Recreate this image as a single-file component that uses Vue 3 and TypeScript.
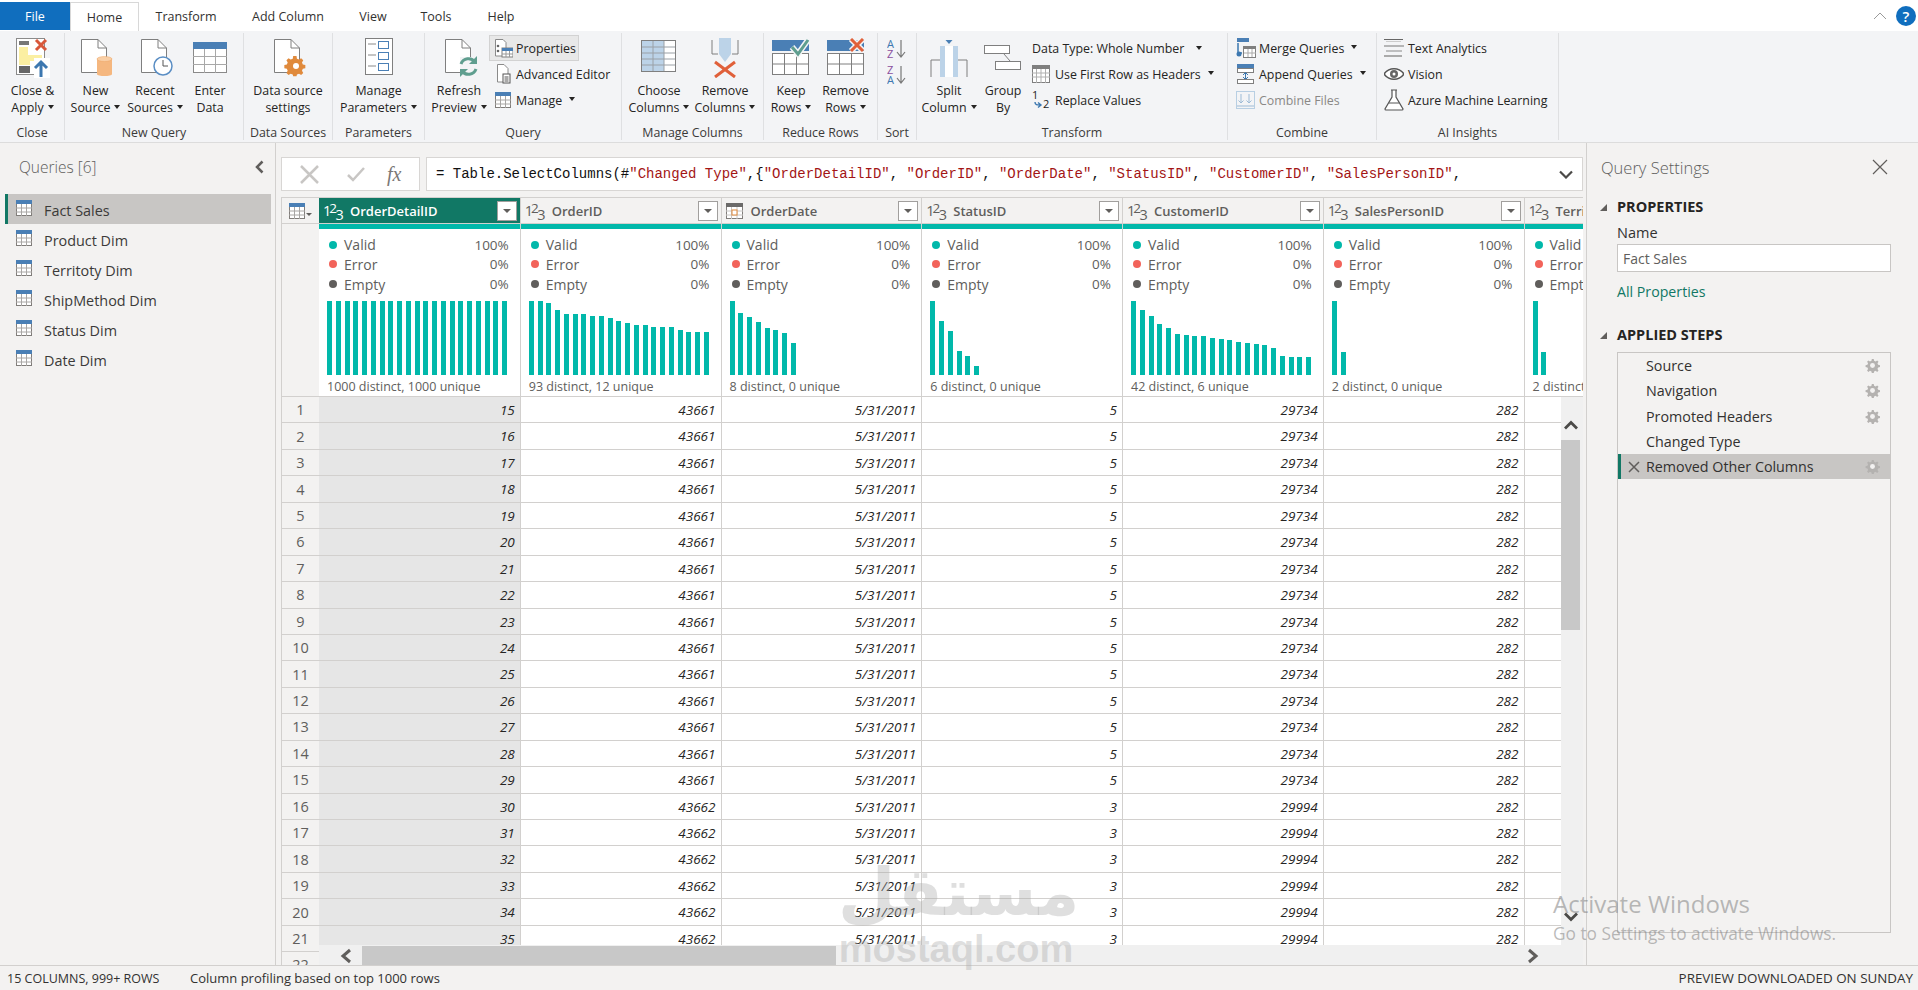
<script setup lang="ts">
interface Col { name: string; icon: 'num' | 'date'; filter: boolean; distinct: string; bars: number[]; values: (i: number) => string }
const full = Array.from({ length: 21 }, () => 74)
const cols: Col[] = [
  { name: 'OrderDetailID', icon: 'num', filter: true, distinct: '1000 distinct, 1000 unique', bars: full, values: (i) => String(i + 15) },
  { name: 'OrderID', icon: 'num', filter: true, distinct: '93 distinct, 12 unique', bars: [74, 74, 72, 65, 61, 61, 61, 59, 59, 57, 54, 52, 50, 50, 48, 48, 48, 45, 43, 43, 43], values: (i) => (i < 15 ? '43661' : '43662') },
  { name: 'OrderDate', icon: 'date', filter: true, distinct: '8 distinct, 0 unique', bars: [74, 62, 58, 53, 47, 45, 42, 32], values: () => '5/31/2011' },
  { name: 'StatusID', icon: 'num', filter: true, distinct: '6 distinct, 0 unique', bars: [74, 54, 44, 24, 19, 9], values: (i) => (i < 15 ? '5' : '3') },
  { name: 'CustomerID', icon: 'num', filter: true, distinct: '42 distinct, 6 unique', bars: [74, 65, 59, 51, 47, 41, 40, 39, 39, 37, 36, 35, 33, 32, 31, 30, 27, 19, 18, 18, 18], values: (i) => (i < 15 ? '29734' : '29994') },
  { name: 'SalesPersonID', icon: 'num', filter: true, distinct: '2 distinct, 0 unique', bars: [74, 23], values: () => '282' },
  { name: 'TerritoryID', icon: 'num', filter: false, distinct: '2 distinct, 0 unique', bars: [74, 23], values: () => '' },
]
const stats = [
  { label: 'Valid', pct: '100%', cls: 'd-valid' },
  { label: 'Error', pct: '0%', cls: 'd-error' },
  { label: 'Empty', pct: '0%', cls: 'd-empty' },
]
const rows = Array.from({ length: 22 }, (_, i) => i)
const queries = ['Fact Sales', 'Product Dim', 'Territoty Dim', 'ShipMethod Dim', 'Status Dim', 'Date Dim']
const steps = [
  { name: 'Source', gear: true },
  { name: 'Navigation', gear: true },
  { name: 'Promoted Headers', gear: true },
  { name: 'Changed Type', gear: false },
  { name: 'Removed Other Columns', gear: true },
]
const tabs = [
  { name: 'Transform', cls: 't-transform' },
  { name: 'Add Column', cls: 't-add' },
  { name: 'View', cls: 't-view' },
  { name: 'Tools', cls: 't-tools' },
  { name: 'Help', cls: 't-help' },
]
const strs = ['"OrderDetailID"', '"OrderID"', '"OrderDate"', '"StatusID"', '"CustomerID"', '"SalesPersonID"']
</script>

<template>
  <div class="app">
    <svg class="defs" width="0" height="0">
      <symbol id="tbl" viewBox="0 0 16 16">
        <rect x="0.5" y="0.5" width="15" height="15" fill="#fff" stroke="#807d7a" />
        <rect x="0" y="0" width="16" height="4" fill="#4a7fb5" />
        <path d="M0 8h16M0 12h16M5.5 4v12M10.5 4v12" stroke="#a8a6a4" />
      </symbol>
      <symbol id="gear" viewBox="0 0 16 16">
        <path d="M8 1l1.3 0 .4 2 1.6.7 1.7-1.1 1.4 1.4-1.1 1.7.7 1.6 2 .4v2l-2 .4-.7 1.6 1.1 1.7-1.4 1.4-1.7-1.1-1.6.7-.4 2h-2l-.4-2-1.6-.7-1.7 1.1-1.4-1.4 1.1-1.7-.7-1.6-2-.4v-2l2-.4.7-1.6-1.1-1.7 1.4-1.4 1.7 1.1 1.6-.7.4-2z" fill="#b4b2b0" />
        <circle cx="8" cy="8" r="2.6" fill="#f3f2f1" />
      </symbol>
      <symbol id="doc" viewBox="0 0 26 34">
        <path d="M.5.5H17L25.5 9V33.5H.5Z" fill="#fff" stroke="#7f7f7f" />
        <path d="M17 .5V9h8.5" fill="none" stroke="#7f7f7f" />
      </symbol>
    </svg>

    <header class="tabs">
      <div class="tab file">File</div>
      <div class="tab home">Home</div>
      <div v-for="t in tabs" :key="t.name" class="tab" :class="t.cls">{{ t.name }}</div>
      <div class="tab-right">
        <svg class="collapse" width="14" height="8" viewBox="0 0 14 8"><path d="M1 7l6-6 6 6" fill="none" stroke="#9a9a9a" /></svg>
        <div class="help">?</div>
      </div>
    </header>

    <section class="ribbon">
      <div class="grp g-close">
        <div class="grp-body">
          <div class="big w65">
            <svg class="ic" width="34" height="40" viewBox="0 0 34 40">
              <rect x=".5" y=".5" width="28" height="36" fill="#fff" stroke="#8a8a8a" />
              <rect x="3" y="3" width="10" height="4" fill="#777" />
              <path d="M3 9H12V17H26V23H14V27H3Z" fill="#fbefa2" />
              <rect x="3" y="28" width="11" height="7" fill="#666" />
              <rect x="18" y="20" width="16" height="20" fill="#fff" />
              <path d="M20 2l10 10M30 2L20 12" stroke="#d8573a" stroke-width="3" />
              <path d="M25 39V25M19 30l6-6 6 6" fill="none" stroke="#3d78b0" stroke-width="3" />
            </svg>
            <span>Close &amp;<br />Apply<i class="caret" /></span>
          </div>
        </div>
        <div class="grp-label">Close</div>
      </div>

      <div class="grp g-new">
        <div class="grp-body">
          <div class="big w61">
            <svg class="ic" width="34" height="40" viewBox="0 0 34 40">
              <use href="#doc" x="2" y="1" width="26" height="34" />
              <path d="M18 21c0-2.500 15-2.500 15 0v15c0 2.800-15 2.800-15 0z" fill="#f5b77f" />
              <ellipse cx="25.500" cy="21" rx="7.500" ry="2.500" fill="#f9cfa6" stroke="#eda465" stroke-width=".5" />
            </svg>
            <span>New<br />Source<i class="caret" /></span>
          </div>
          <div class="big w58">
            <svg class="ic" width="36" height="40" viewBox="0 0 36 40">
              <use href="#doc" x="4" y="1" width="26" height="34" />
              <circle cx="26" cy="28" r="9" fill="#fff" stroke="#5a8ec4" stroke-width="1.500" />
              <path d="M26 22v6h5" fill="none" stroke="#555" />
            </svg>
            <span>Recent<br />Sources<i class="caret" /></span>
          </div>
          <div class="big w52">
            <svg class="ic" width="34" height="40" viewBox="0 0 34 40">
              <rect x=".5" y="4.500" width="33" height="30" fill="#fff" stroke="#8a8a8a" />
              <rect x="0" y="4" width="34" height="7" fill="#4a7fb5" />
              <path d="M0 18.500h34M0 26.500h34M11.500 11v24M22.500 11v24" stroke="#a8a8a8" />
            </svg>
            <span>Enter<br />Data</span>
          </div>
        </div>
        <div class="grp-label">New Query</div>
      </div>

      <div class="grp g-ds">
        <div class="grp-body">
          <div class="big wfull">
            <svg class="ic" width="36" height="40" viewBox="0 0 36 40">
              <use href="#doc" x="4" y="1" width="26" height="34" />
              <path d="M24 18h4l.5 3 2.500 1 2.500-1.500 2.500 2.500-1.500 2.500 1 2.500 3 .5v4l-3 .5-1 2.500 1.500 2.500-2.500 2.500-2.500-1.500-2.500 1-.5 2h-4l-.5-2-2.500-1-2.500 1.500-2.500-2.500 1.500-2.500-1-2.500-3-.5v-4l3-.5 1-2.500-1.500-2.500 2.500-2.500 2.500 1.500 2.500-1z" fill="#e08a3c" transform="translate(3 3) scale(.84)" />
              <circle cx="26" cy="28" r="3" fill="#fff" />
            </svg>
            <span>Data source<br />settings</span>
          </div>
        </div>
        <div class="grp-label">Data Sources</div>
      </div>

      <div class="grp g-par">
        <div class="grp-body">
          <div class="big wfull">
            <svg class="ic" width="28" height="40" viewBox="0 0 28 40">
              <rect x=".5" y=".5" width="27" height="36" fill="#fff" stroke="#7f7f7f" />
              <path d="M3 6h8M3 17h8M3 28h8" stroke="#8a8a8a" />
              <rect x="13.500" y="3.500" width="10" height="7" fill="#fff" stroke="#4a7fb5" />
              <rect x="13.500" y="14.500" width="10" height="7" fill="#fff" stroke="#4a7fb5" />
              <rect x="13.500" y="25.500" width="10" height="7" fill="#fff" stroke="#4a7fb5" />
            </svg>
            <span>Manage<br />Parameters<i class="caret" /></span>
          </div>
        </div>
        <div class="grp-label">Parameters</div>
      </div>

      <div class="grp g-query">
        <div class="grp-body">
          <div class="big w-refresh">
            <svg class="ic" width="38" height="40" viewBox="0 0 38 40">
              <use href="#doc" x="5" y="1" width="26" height="34" />
              <rect x="20" y="19" width="18" height="20" fill="#f3f4f6" />
              <path d="M21 26a8 8 0 0 1 14-2M36 31a8 8 0 0 1-14 2" fill="none" stroke="#5f9e8f" stroke-width="3" />
              <path d="M37 18v8h-8zM20 39v-8h8z" fill="#5f9e8f" />
            </svg>
            <span>Refresh<br />Preview<i class="caret" /></span>
          </div>
          <div class="smalls">
            <div class="sm sel">
              <svg class="si" width="19" height="20" viewBox="0 0 19 20">
                <path d="M1.500 1.500H9L12 4.500V18H1.500Z" fill="#fff" stroke="#8a8a8a" />
                <circle cx="4" cy="8" r="1.300" fill="#666" /><circle cx="4" cy="13" r="1.300" fill="#666" />
                <rect x="8" y="10" width="11" height="9" fill="#fff" stroke="#7f7f7f" />
                <rect x="8" y="10" width="11" height="3" fill="#4a7fb5" />
                <path d="M8 16h11M12 13v6M15.500 13v6" stroke="#999" />
              </svg>
              <span>Properties</span>
            </div>
            <div class="sm">
              <svg class="si" width="19" height="20" viewBox="0 0 19 20">
                <path d="M3.500 .5H10L14 4.500V18H3.500Z" fill="#fff" stroke="#8a8a8a" />
                <rect x="9" y="10" width="7" height="9" fill="#fff" stroke="#555" />
                <path d="M10.500 13h4M10.500 15h4M10.500 17h4" stroke="#555" />
              </svg>
              <span>Advanced Editor</span>
            </div>
            <div class="sm">
              <svg class="si" width="19" height="20" viewBox="0 0 19 20"><use href="#tbl" x="1" y="2" width="16" height="16" /></svg>
              <span>Manage<i class="caret wide" /></span>
            </div>
          </div>
        </div>
        <div class="grp-label">Query</div>
      </div>

      <div class="grp g-mc">
        <div class="grp-body">
          <div class="big w-choose">
            <svg class="ic" width="36" height="40" viewBox="0 0 36 40">
              <rect x=".5" y="2.500" width="34" height="31" fill="#fff" stroke="#7f7f7f" />
              <rect x="1" y="3" width="22" height="30" fill="#bcd3e8" />
              <path d="M1 9h33M1 15h33M1 21h33M1 27h33M12 3v30M23 3v30" stroke="#9aa0a6" />
            </svg>
            <span>Choose<br />Columns<i class="caret" /></span>
          </div>
          <div class="big w-remove">
            <svg class="ic" width="30" height="40" viewBox="0 0 30 40">
              <path d="M2 2v14h6M28 2v14h-6" fill="none" stroke="#7f7f7f" />
              <path d="M9 0h12v16l-6 8-6-8z" fill="#bcd3e8" />
              <path d="M5 24l20 15M25 24L5 39" stroke="#e0603a" stroke-width="3" />
            </svg>
            <span>Remove<br />Columns<i class="caret" /></span>
          </div>
        </div>
        <div class="grp-label">Manage Columns</div>
      </div>

      <div class="grp g-rr">
        <div class="grp-body">
          <div class="big w-keep">
            <svg class="ic" width="38" height="40" viewBox="0 0 38 40">
              <rect x="0" y="2" width="37" height="11" fill="#4a7fb5" />
              <rect x=".5" y="15.500" width="36" height="21" fill="#fff" stroke="#7f7f7f" />
              <path d="M0 26h37M12.500 15v22M24.500 15v22" stroke="#7f7f7f" />
              <path d="M20 9l6 7 10-14" fill="none" stroke="#f3f4f6" stroke-width="6" />
              <path d="M20 9l6 7 10-14" fill="none" stroke="#5f9e8f" stroke-width="3" />
            </svg>
            <span>Keep<br />Rows<i class="caret" /></span>
          </div>
          <div class="big w55">
            <svg class="ic" width="38" height="40" viewBox="0 0 38 40">
              <rect x="0" y="2" width="37" height="11" fill="#4a7fb5" />
              <rect x=".5" y="15.500" width="36" height="21" fill="#fff" stroke="#7f7f7f" />
              <path d="M0 26h37M12.500 15v22M24.500 15v22" stroke="#7f7f7f" />
              <path d="M24 1l12 12M36 1L24 13" stroke="#f3f4f6" stroke-width="6" />
              <path d="M24 1l12 12M36 1L24 13" stroke="#e0603a" stroke-width="3" />
            </svg>
            <span>Remove<br />Rows<i class="caret" /></span>
          </div>
        </div>
        <div class="grp-label">Reduce Rows</div>
      </div>

      <div class="grp g-sort">
        <div class="grp-body sort-body">
          <svg width="20" height="20" viewBox="0 0 20 20">
            <text x="0" y="9" class="az blue">A</text><text x="0" y="19" class="az purple">Z</text>
            <path d="M14 1v16M10 13l4 5 4-5" fill="none" stroke="#777" stroke-width="1.200" />
          </svg>
          <svg width="20" height="20" viewBox="0 0 20 20">
            <text x="0" y="9" class="az purple">Z</text><text x="0" y="19" class="az blue">A</text>
            <path d="M14 1v16M10 13l4 5 4-5" fill="none" stroke="#777" stroke-width="1.200" />
          </svg>
        </div>
        <div class="grp-label">Sort</div>
      </div>

      <div class="grp g-tr">
        <div class="grp-body">
          <div class="big w64">
            <svg class="ic" width="38" height="40" viewBox="0 0 38 40">
              <path d="M13 22H1v17M25 22h12v17" fill="none" stroke="#7f7f7f" />
              <rect x="10" y="8" width="5" height="31" fill="#bcd3e8" />
              <rect x="23" y="8" width="5" height="31" fill="#bcd3e8" />
              <path d="M15 8h8v31h-8z" fill="#fff" />
              <path d="M15.500 2h7L19 6z" fill="#4a7fb5" />
            </svg>
            <span>Split<br />Column<i class="caret" /></span>
          </div>
          <div class="big w44">
            <svg class="ic" width="38" height="40" viewBox="0 0 38 40">
              <rect x=".5" y="7.500" width="25" height="8" fill="#fff" stroke="#7f7f7f" />
              <rect x="11.500" y="23.500" width="25" height="8" fill="#fff" stroke="#7f7f7f" />
              <path d="M20 16l6 7" stroke="#7f7f7f" />
            </svg>
            <span>Group<br />By</span>
          </div>
          <div class="smalls">
            <div class="sm notop">Data Type: Whole Number<i class="caret wide" /></div>
            <div class="sm">
              <svg class="si wide-si" width="18" height="18" viewBox="0 0 18 18">
                <rect x=".5" y=".5" width="17" height="17" fill="#fff" stroke="#7f7f7f" />
                <rect x="0" y="0" width="18" height="4" fill="#7f7f7f" />
                <path d="M0 8h18M0 12h18M4.500 4v14M9 4v14M13.500 4v14" stroke="#b0b0b0" />
              </svg>
              <span>Use First Row as Headers<i class="caret wide" /></span>
            </div>
            <div class="sm">
              <svg class="si wide-si" width="18" height="20" viewBox="0 0 18 20">
                <text x="0" y="9" class="rep">1</text><text x="11" y="18" class="rep">2</text>
                <path d="M3 12c0 3 2 3 5 3M6 12.500l3 2.500-3 2.500" fill="none" stroke="#3d78b0" stroke-width="1.400" />
              </svg>
              <span>Replace Values</span>
            </div>
          </div>
        </div>
        <div class="grp-label">Transform</div>
      </div>

      <div class="grp g-co">
        <div class="grp-body">
          <div class="smalls">
            <div class="sm">
              <svg class="si" width="20" height="20" viewBox="0 0 20 20">
                <rect x="1" y="0" width="12" height="4" fill="#4a7fb5" />
                <rect x="7.500" y="8.500" width="12" height="11" fill="#fff" stroke="#7f7f7f" />
                <rect x="7" y="8" width="13" height="3" fill="#7f7f7f" />
                <path d="M8 15h12M12 11v8M16 11v8" stroke="#aaa" />
                <path d="M2 5v10h4" fill="none" stroke="#3d78b0" stroke-width="1.500" />
                <circle cx="3" cy="16" r="2.500" fill="#3d78b0" />
              </svg>
              <span>Merge Queries<i class="caret wide" /></span>
            </div>
            <div class="sm">
              <svg class="si" width="20" height="20" viewBox="0 0 20 20">
                <rect x="1" y="0" width="17" height="4" fill="#4a7fb5" />
                <rect x="1.500" y="4.500" width="16" height="4" fill="#fff" stroke="#7f7f7f" />
                <path d="M9.500 9v6M7 11l2.500-2.500L12 11M7 13l2.500 2.500L12 13" fill="none" stroke="#3d78b0" />
                <rect x="1.500" y="15.500" width="16" height="4" fill="#fff" stroke="#7f7f7f" />
              </svg>
              <span>Append Queries<i class="caret wide" /></span>
            </div>
            <div class="sm off">
              <svg class="si" width="20" height="20" viewBox="0 0 20 20">
                <rect x=".5" y="1.500" width="18" height="17" fill="#f3f4f6" stroke="#b8cfe3" />
                <path d="M5 4v9M2.500 10.500L5 13l2.500-2.500M13 4v9M10.500 10.500L13 13l2.500-2.500M1 16h17" fill="none" stroke="#9dbbd6" />
              </svg>
              <span>Combine Files</span>
            </div>
          </div>
        </div>
        <div class="grp-label">Combine</div>
      </div>

      <div class="grp g-ai">
        <div class="grp-body">
          <div class="smalls">
            <div class="sm ai">
              <svg class="si" width="20" height="20" viewBox="0 0 20 20">
                <path d="M0 1.500h19" stroke="#666" /><path d="M2 3.500h15" stroke="#ccc" />
                <path d="M0 8h20" stroke="#777" /><path d="M2 13h16" stroke="#888" /><path d="M0 18h18" stroke="#aaa" stroke-width="2" />
              </svg>
              <span>Text Analytics</span>
            </div>
            <div class="sm ai">
              <svg class="si" width="20" height="20" viewBox="0 0 20 20">
                <path d="M0 10c5-7 15-7 20 0c-5 7-15 7-20 0z" fill="#fff" stroke="#555" stroke-width="1.500" />
                <circle cx="10" cy="10" r="4" fill="#666" /><circle cx="10" cy="10" r="1.500" fill="#fff" />
              </svg>
              <span>Vision</span>
            </div>
            <div class="sm ai">
              <svg class="si" width="20" height="22" viewBox="0 0 20 22">
                <path d="M7 1h6M8 1v7L1 20a1 1 0 0 0 1 1h16a1 1 0 0 0 1-1L12 8V1" fill="#fff" stroke="#555" stroke-width="1.200" />
                <path d="M5 14h10" stroke="#555" />
              </svg>
              <span>Azure Machine Learning</span>
            </div>
          </div>
        </div>
        <div class="grp-label">AI Insights</div>
      </div>
    </section>

    <main class="main">
      <aside class="queries">
        <div class="q-head">
          <span>Queries [6]</span>
          <svg width="9" height="14" viewBox="0 0 9 14"><path d="M7.500 1.500L2 7l5.500 5.500" fill="none" stroke="#605e5c" stroke-width="2.500" /></svg>
        </div>
        <ul class="q-list">
          <li v-for="(q, i) in queries" :key="q" class="q-item" :class="{ active: i === 0 }">
            <svg width="16" height="16"><use href="#tbl" /></svg>
            <span>{{ q }}</span>
          </li>
        </ul>
      </aside>

      <div class="center">
        <div class="formula-row">
          <div class="fx-box">
            <svg width="19" height="19" viewBox="0 0 19 19"><path d="M1 1l17 17M18 1L1 18" stroke="#c8c6c4" stroke-width="2.500" /></svg>
            <svg width="18" height="15" viewBox="0 0 18 15"><path d="M1 8l5 5L17 1" fill="none" stroke="#c8c6c4" stroke-width="2.500" /></svg>
            <span class="fx">fx</span>
          </div>
          <div class="formula">
            <span class="f-text">= Table.SelectColumns(#<b>"Changed Type"</b>,{<template v-for="(s, i) in strs" :key="s"><b>{{ s }}</b>,{{ i < strs.length - 1 ? ' ' : '' }}</template></span>
            <svg width="14" height="9" viewBox="0 0 14 9"><path d="M1 1.500l6 6 6-6" fill="none" stroke="#4b4a48" stroke-width="2.200" /></svg>
          </div>
        </div>

        <div class="grid">
          <div class="cols head">
            <div class="corner">
              <svg width="16" height="16"><use href="#tbl" /></svg>
              <i class="corner-caret" />
            </div>
            <div v-for="(c, i) in cols" :key="c.name" class="hcell" :class="{ selected: i === 0 }">
              <span v-if="c.icon === 'num'" class="ty"><span class="t1">1</span><span class="t2">2</span><span class="t3">3</span></span>
              <svg v-else class="date-ic" width="17" height="16" viewBox="0 0 17 16">
                <rect x=".5" y=".5" width="16" height="15" fill="#fff" stroke="#807d7a" />
                <rect x="0" y="0" width="17" height="4" fill="#6b6a69" />
                <path d="M0 8h17M0 12h17M5.500 4v12M11 4v12" stroke="#c8c6c4" />
                <rect x="6" y="7" width="5" height="5" fill="#fff" stroke="#e08a3c" />
              </svg>
              <span class="hname">{{ c.name }}</span>
              <span v-if="c.filter" class="filter"><i /></span>
            </div>
          </div>

          <div class="cols prof">
            <div class="numcol" />
            <div v-for="c in cols" :key="c.name" class="pcell">
              <div class="teal" />
              <div v-for="s in stats" :key="s.label" class="stat">
                <i class="dot" :class="s.cls" /><span class="stat-l">{{ s.label }}</span><span class="stat-p">{{ s.pct }}</span>
              </div>
              <div class="bars">
                <i v-for="(b, k) in c.bars" :key="k" :style="{ height: b + 'px' }" />
              </div>
              <div class="distinct">{{ c.distinct }}</div>
            </div>
          </div>

          <div v-for="r in rows" :key="r" class="cols row">
            <div class="numcol rn">{{ r + 1 }}</div>
            <div v-for="(c, i) in cols" :key="c.name" class="cell" :class="{ selcell: i === 0 }">{{ r < 21 ? c.values(r) : '' }}</div>
          </div>

          <div class="vbar">
            <svg class="up" width="16" height="10" viewBox="0 0 16 10"><path d="M2 8.500l6-6 6 6" fill="none" stroke="#4b4a48" stroke-width="2.800" /></svg>
            <div class="vthumb" />
            <svg class="down" width="16" height="10" viewBox="0 0 16 10"><path d="M2 1.500l6 6 6-6" fill="none" stroke="#4b4a48" stroke-width="2.800" /></svg>
          </div>
          <div class="hbar">
            <svg class="left" width="12" height="16" viewBox="0 0 12 16"><path d="M10 2L3 8l7 6" fill="none" stroke="#605e5c" stroke-width="3" /></svg>
            <div class="hthumb" />
            <svg class="right" width="12" height="16" viewBox="0 0 12 16"><path d="M2 2l7 6-7 6" fill="none" stroke="#605e5c" stroke-width="3" /></svg>
          </div>
        </div>
      </div>

      <aside class="settings">
        <div class="s-title">
          <span>Query Settings</span>
          <svg width="16" height="16" viewBox="0 0 16 16"><path d="M1 1l14 14M15 1L1 15" stroke="#605e5c" stroke-width="1.200" /></svg>
        </div>
        <div class="s-sec s-prop"><i class="tri" />PROPERTIES</div>
        <div class="s-name">Name</div>
        <div class="s-input">Fact Sales</div>
        <div class="s-link">All Properties</div>
        <div class="s-sec s-app"><i class="tri" />APPLIED STEPS</div>
        <div class="steps">
          <div v-for="(s, i) in steps" :key="s.name" class="step" :class="{ cur: i === 4 }">
            <svg v-if="i === 4" class="step-x" width="12" height="12" viewBox="0 0 12 12"><path d="M1 1l10 10M11 1L1 11" stroke="#605e5c" stroke-width="1.500" /></svg>
            <span class="step-name">{{ s.name }}</span>
            <svg v-if="s.gear" class="step-gear" width="15" height="15"><use href="#gear" /></svg>
          </div>
        </div>
      </aside>
    </main>

    <footer class="status">
      <span class="st-a">15 COLUMNS, 999+ ROWS</span>
      <span class="st-b">Column profiling based on top 1000 rows</span>
      <span class="st-c">PREVIEW DOWNLOADED ON SUNDAY</span>
    </footer>

    <div class="wm">
      <div class="wm-ar">مستقل</div>
      <div class="wm-en">mostaql.com</div>
    </div>
    <div class="activate">
      <div class="ac-a">Activate Windows</div>
      <div class="ac-b">Go to Settings to activate Windows.</div>
    </div>
  </div>
</template>

<style scoped>
* { box-sizing: border-box; }
i { font-style: normal; }
.app { position: relative; width: 1918px; height: 990px; overflow: hidden; display: flex; flex-direction: column; background: #f3f2f1; color: #252423; font-family: "Open Sans", "Noto Sans", sans-serif; font-size: 12.400px; }
.defs { position: absolute; }

.tabs { height: 31px; flex: none; display: flex; background: #fff; padding-top: 2px; position: relative; z-index: 1; font-size: 12.500px; }
.tab { display: flex; align-items: center; justify-content: center; height: 28px; color: #323130; }
.file { width: 70px; background: #106ebe; color: #fff; }
.home { width: 69px; height: 29px; background: #fff; border: 1px solid #d8d8d8; border-bottom: none; }
.t-transform { width: 94px; } .t-add { width: 110px; } .t-view { width: 60px; } .t-tools { width: 66px; } .t-help { width: 64px; }
.tab-right { margin-left: auto; display: flex; align-items: center; height: 28px; gap: 9px; padding-right: 2px; }
.help { width: 20px; height: 20px; border-radius: 50%; background: #106ebe; color: #fff; display: flex; align-items: center; justify-content: center; font-size: 15px; font-weight: 600; }

.ribbon { height: 113px; flex: none; display: flex; background: #f3f4f6; border-top: 1px solid #dcdcdc; border-bottom: 1px solid #dcdcdc; margin-top: -1px; padding-top: 2px; }
.grp { height: 107px; display: flex; flex-direction: column; border-right: 1px solid #dfe0e2; flex: none; }
.grp-body { height: 92px; display: flex; flex: none; }
.grp-label { text-align: center; line-height: 16px; color: #3b3a39; white-space: nowrap; }
.g-close { width: 65px; } .g-new { width: 179px; } .g-ds { width: 89px; } .g-par { width: 92px; } .g-query { width: 197px; }
.g-mc { width: 142px; } .g-rr { width: 114px; } .g-sort { width: 39px; } .g-tr { width: 311px; } .g-co { width: 149px; } .g-ai { width: 182px; }
.big { display: flex; flex-direction: column; align-items: center; text-align: center; line-height: 17px; padding-top: 5px; flex: none; white-space: nowrap; }
.big .ic { height: 40px; margin-bottom: 4px; flex: none; }
.w65 { width: 65px; } .w61 { width: 61px; } .w58 { width: 58px; } .w52 { width: 52px; } .wfull { width: 100%; }
.w64 { width: 64px; } .w55 { width: 55px; } .w44 { width: 44px; }
.w-refresh { width: 68px; margin-right: -4px; }
.w-choose { width: 74px; }
.w-remove { width: 58px; }
.w-keep { width: 54px; }
.caret { display: inline-block; width: 0; height: 0; border-left: 3.500px solid transparent; border-right: 3.500px solid transparent; border-top: 4px solid #252423; margin-left: 4px; vertical-align: 3px; }
.caret.wide { margin-left: 7px; vertical-align: 4px; }
.smalls { display: flex; flex-direction: column; padding-top: 2px; }
.sm { height: 26px; display: flex; align-items: center; white-space: nowrap; padding-left: 5px; gap: 3px; }
.sm.sel { background: #e8e8e8; outline: 1px solid #d2d2d2; outline-offset: -1px; width: 90px; }
.sm.notop { padding-left: 0; gap: 0; }
.sm.off { color: #8a8886; }
.sm .si { flex: none; }
.g-co .smalls { padding-left: 8px; }
.g-co .sm, .g-ai .sm { padding-left: 0; }
.g-ai .smalls { padding-left: 7px; }
.g-ai .sm { gap: 4px; }
.g-tr .sm { padding-left: 0; gap: 5px; }
.g-tr .smalls { padding-left: 7px; }
.wide-si { flex: none; }
.sort-body { flex-direction: column; align-items: center; gap: 6px; padding-top: 6px; }
.az { font: 400 11px "Open Sans", sans-serif; }
.blue { fill: #3d78b0; } .purple { fill: #8a4f9e; }
.rep { font: 400 11px "Open Sans", sans-serif; fill: #252423; }

.main { flex: 1; display: flex; min-height: 0; }
.queries { width: 276px; flex: none; border-right: 1px solid #d2d0ce; padding-top: 12px; }
.q-head { display: flex; justify-content: space-between; align-items: center; height: 24px; padding: 0 11px 0 19px; font-size: 15.500px; color: #605e5c; font-weight: 300; }
.q-list { list-style: none; margin: 15px 4px 0 5px; padding: 0; }
.q-item { height: 30px; display: flex; align-items: center; gap: 12px; padding-left: 11px; font-size: 14.400px; color: #3b3a39; }
.q-item svg { margin-top: -3px; }
.q-item span { padding-top: 2px; }
.q-item.active { background: #c8c6c4; border-left: 3px solid #117865; padding-left: 8px; }

.center { width: 1310px; flex: none; padding: 14px 3px 0 5px; display: flex; flex-direction: column; }
.formula-row { display: flex; gap: 6px; height: 34px; flex: none; }
.fx-box { width: 139px; background: #fff; border: 1px solid #d8d6d4; display: flex; align-items: center; padding-left: 18px; }
.fx-box svg:nth-child(2) { margin-left: 28px; }
.fx { margin-left: 22px; font-family: "Liberation Serif", serif; font-size: 20px; color: #7a7876; font-style: italic; line-height: 20px; }
.formula { flex: 1; background: #fff; border: 1px solid #d8d6d4; display: flex; align-items: center; justify-content: space-between; padding: 0 9px 0 9px; }
.f-text { font-family: "Liberation Mono", monospace; font-size: 14px; white-space: pre; color: #111; }
.f-text b { font-weight: 400; color: #a31515; }

.grid { position: relative; height: 768px; margin-top: 6px; flex: none; overflow: hidden; border-top: 1px solid #d2d0ce; }
.cols { display: grid; grid-template-columns: 38px repeat(6, 200.750px) 60px; width: 1302px; }
.head { height: 26px; }
.corner { border: 1px solid #d2d0ce; border-top: none; border-right: none; display: flex; align-items: center; padding-left: 7px; }
.corner-caret { width: 0; height: 0; border-left: 3px solid transparent; border-right: 3px solid transparent; border-top: 3px solid #605e5c; margin: 8px 0 0 1px; }
.hcell { display: flex; align-items: center; background: #f3f2f1; border-left: 1px solid #d2d0ce; border-bottom: 1px solid #d2d0ce; padding-left: 4px; font-weight: 600; font-size: 13px; color: #605e5c; position: relative; overflow: hidden; }
.hcell.selected { background: #117865; color: #fff; border-left: none; }
.ty { display: flex; height: 22px; width: 20px; font-weight: 400; font-size: 14.500px; line-height: 13px; flex: none; }
.ty span { width: 6.200px; flex: none; }
.t1 { align-self: flex-start; margin-top: 4px; } .t2 { align-self: flex-start; margin-top: 2px; font-size: 13.500px; } .t3 { align-self: flex-end; margin-bottom: 1px; }
.date-ic { width: 17px; flex: none; }
.hname { margin-left: 7px; white-space: nowrap; }
.date-ic + .hname { margin-left: 8px; }
.filter { position: absolute; right: 3px; top: 3px; width: 20px; height: 20px; background: #fff; border: 1px solid #a19f9d; display: flex; align-items: center; justify-content: center; }
.filter i { width: 0; height: 0; border-left: 4px solid transparent; border-right: 4px solid transparent; border-top: 4px solid #605e5c; }

.prof { height: 173px; }
.numcol { background: #f3f2f1; border-left: 1px solid #d2d0ce; border-bottom: 1px solid #d2d0ce; }
.pcell { background: #fff; border-left: 1px solid #d2d0ce; border-bottom: 1px solid #d2d0ce; display: flex; flex-direction: column; overflow: hidden; color: #605e5c; font-size: 12.500px; }
.pcell:nth-child(2) { border-left: none; }
.teal { height: 5px; background: #01b8aa; margin-bottom: 6px; flex: none; }
.stat { height: 20px; display: flex; align-items: center; padding: 0 11px 0 10px; white-space: nowrap; flex: none; min-width: 199px; font-size: 13.500px; margin-top: -.3px; }
.stat-l { font-size: 14px; }
.dot { width: 8px; height: 8px; border-radius: 50%; margin-right: 7px; flex: none; }
.d-valid { background: #01b8aa; } .d-error { background: #f2635a; } .d-empty { background: #605e5c; }
.stat-p { margin-left: auto; }
.bars { height: 74px; margin-top: 7px; padding-left: 8px; display: flex; align-items: flex-end; gap: 3.750px; flex: none; min-width: 199px; }
.bars i { width: 5px; background: #01b8aa; display: block; flex: none; }
.distinct { height: 23px; line-height: 23px; padding-left: 8px; white-space: nowrap; flex: none; }

.row { height: 26.450px; }
.rn { display: flex; align-items: center; justify-content: center; font-size: 14.500px; color: #605e5c; }
.cell { background: #fff; border-left: 1px solid #d2d0ce; border-bottom: 1px solid #d2d0ce; text-align: right; padding-right: 5px; font-style: italic; font-size: 13.500px; line-height: 26px; color: #252423; overflow: hidden; white-space: nowrap; }
.cell.selcell { background: #e6e6e6; border-left: none; }

.vbar { position: absolute; left: 1280px; top: 199px; width: 22px; height: 548px; background: #f0f0f0; }
.vbar svg { position: absolute; left: 2px; }
.up { top: 23px; } .down { top: 515px; }
.vthumb { position: absolute; left: 0; top: 43px; width: 19px; height: 190px; background: #c8c8c8; }
.hbar { position: absolute; left: 38px; top: 747px; width: 1264px; height: 21px; background: #f0f0f0; }
.hbar svg { position: absolute; top: 3px; }
.left { left: 21px; } .right { left: 1208px; }
.hthumb { position: absolute; left: 43px; top: 1px; width: 474px; height: 19px; background: #c8c8c8; }

.settings { flex: 1; border-left: 1px solid #d2d0ce; padding: 12px 28px 0 30px; }
.s-title { display: flex; justify-content: space-between; align-items: center; height: 24px; font-size: 16.500px; color: #605e5c; font-weight: 300; margin-left: -16px; padding-right: 3px; }
.s-sec { font-weight: 700; font-size: 14.500px; line-height: 20px; color: #252423; display: flex; align-items: center; }
.tri { width: 0; height: 0; border-left: 7px solid transparent; border-bottom: 7px solid #605e5c; margin: 0 10px 0 -17px; }
.s-prop { margin-top: 18px; }
.s-name { margin-top: 6px; line-height: 20px; font-size: 14.500px; color: #323130; }
.s-input { margin-top: 1px; height: 28px; width: 274px; background: #fff; border: 1px solid #c8c6c4; line-height: 27px; padding-left: 5px; color: #605e5c; font-size: 14px; }
.s-link { margin-top: 10px; line-height: 20px; color: #117865; font-size: 14.200px; }
.s-app { margin-top: 23px; }
.steps { margin-top: 7px; width: 274px; height: 581px; border: 1px solid #c8c6c4; }
.step { height: 25.250px; display: flex; align-items: center; padding-left: 28px; position: relative; font-size: 14.300px; color: #323130; }
.step.cur { background: #c8c6c4; border-left: 3px solid #117865; padding-left: 25px; }
.step-x { position: absolute; left: 7px; top: 7px; }
.step-gear { margin-left: auto; margin-right: 10px; flex: none; }

.status { height: 25px; flex: none; border-top: 1px solid #d2d0ce; display: flex; align-items: center; padding: 0 5px 0 7px; color: #323130; }
.st-a { font-size: 12.500px; width: 183px; }
.st-b { font-size: 13px; }
.st-c { margin-left: auto; font-size: 13.400px; }

.wm { position: absolute; left: 838px; top: 860px; width: 236px; text-align: center; color: rgba(170, 170, 170, 0.38); pointer-events: none; line-height: 1; white-space: nowrap; }
.wm-ar { font-family: "DejaVu Sans", sans-serif; font-weight: 700; font-size: 66px; height: 70px; }
.wm-en { font-family: "Liberation Sans", sans-serif; font-weight: 700; font-size: 38px; }
.activate { position: absolute; left: 1553px; top: 888px; color: rgba(120, 120, 120, 0.5); pointer-events: none; white-space: nowrap; }
.ac-a { font-size: 24px; line-height: 32px; }
.ac-b { font-size: 17.300px; line-height: 22px; margin-top: 3px; }
</style>

<style>
html, body { margin: 0; padding: 0; background: #f3f2f1; }
</style>
